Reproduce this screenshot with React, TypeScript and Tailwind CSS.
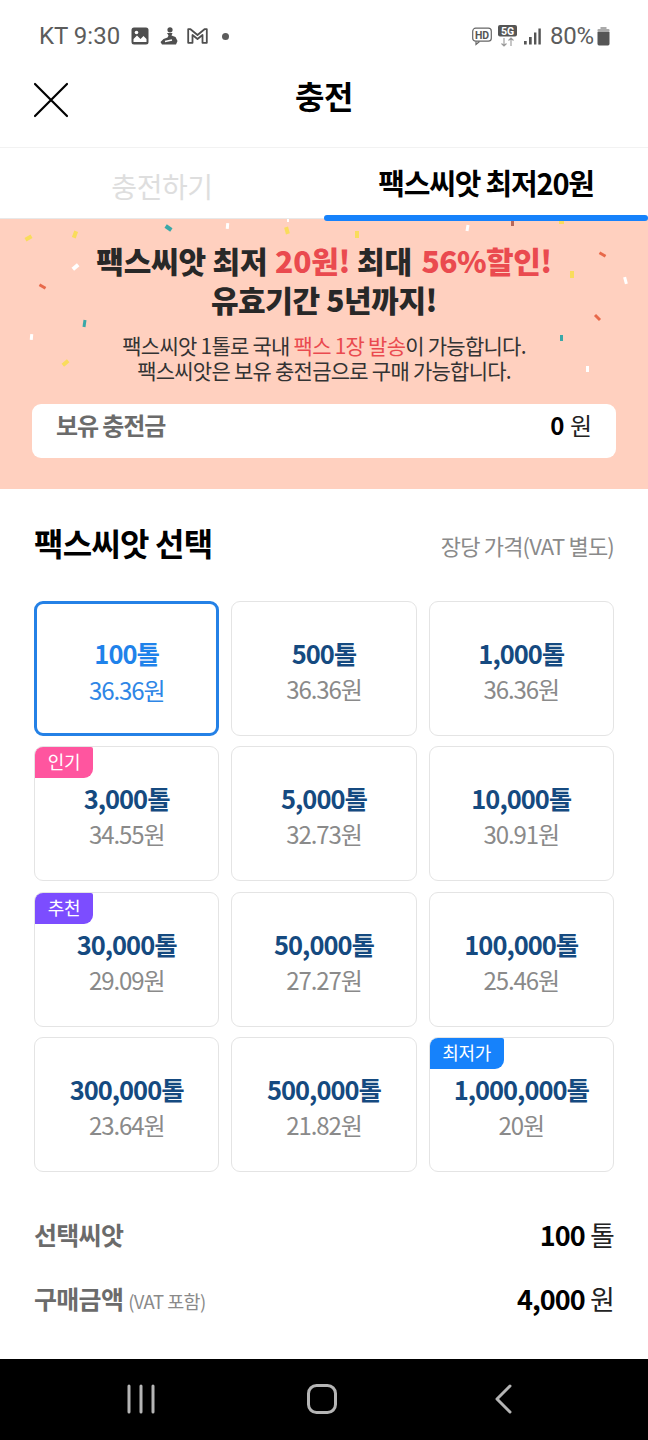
const FONT = { fontFamily: '"Noto Sans CJK KR", "Noto Sans", sans-serif' };

type Seed = { t: string; p: string; badge?: string; badgeClass?: string };

const seeds: Seed[] = [
  { t: "100톨", p: "36.36원" },
  { t: "500톨", p: "36.36원" },
  { t: "1,000톨", p: "36.36원" },
  { t: "3,000톨", p: "34.55원", badge: "인기", badgeClass: "bg-[#ff559f] w-[58px]" },
  { t: "5,000톨", p: "32.73원" },
  { t: "10,000톨", p: "30.91원" },
  { t: "30,000톨", p: "29.09원", badge: "추천", badgeClass: "bg-[#7c4dff] w-[58px]" },
  { t: "50,000톨", p: "27.27원" },
  { t: "100,000톨", p: "25.46원" },
  { t: "300,000톨", p: "23.64원" },
  { t: "500,000톨", p: "21.82원" },
  { t: "1,000,000톨", p: "20원", badge: "최저가", badgeClass: "bg-[#1682fb] w-[74px]" },
];

// centre x, centre y, width, height, rotation, colour
const confetti: [number, number, number, number, number, string][] = [
  [28, 238, 7, 4, -30, "#f9dc5c"],
  [75, 234, 4, 7, 20, "#f9dc5c"],
  [168, 228, 7, 4, 35, "#3aa8a8"],
  [227, 226, 3, 6, 5, "#ffffff"],
  [287, 230, 4, 7, -15, "#f9dc5c"],
  [288, 220, 2, 3, 0, "#ffffff"],
  [75, 267, 7, 4, -40, "#ffffff"],
  [42, 286, 7, 3, 30, "#e8694a"],
  [84, 323, 3, 7, 8, "#3aa8a8"],
  [31, 337, 3, 6, 5, "#ffffff"],
  [65, 363, 7, 4, -40, "#f9dc5c"],
  [357, 234, 4, 7, 0, "#f9dc5c"],
  [467, 228, 3, 6, 10, "#ffffff"],
  [512, 223, 3, 5, 0, "#b8675a"],
  [561, 222, 5, 3, 0, "#f9dc5c"],
  [602, 254, 7, 3, 30, "#e8694a"],
  [572, 274, 4, 7, 0, "#f9dc5c"],
  [625, 280, 3, 7, -15, "#ffffff"],
  [597, 317, 7, 3, 45, "#e8694a"],
  [561, 338, 3, 6, 0, "#3aa8a8"],
  [587, 369, 3, 6, 0, "#ffffff"],
];

function StatusBar() {
  return (
    <div className="h-[72px] flex items-start justify-between pl-[39px] pr-[38px] pt-[20px] text-[#5c5c5c]">
      <div className="flex items-center h-[32px]">
        <span className="text-[24px] leading-[32px]" style={{ fontFamily: "Roboto, sans-serif" }}>KT 9:30</span>
        <svg className="ml-[11px]" width="18" height="18" viewBox="0 0 18 18">
          <rect x="0.5" y="0.5" width="17" height="17" rx="2.5" fill="#4f4f4f" />
          <path d="M2.5 15 L2.5 12 L6 8.5 L9.5 12 L12.5 9 L15.5 12 L15.5 15 Z" fill="#fff" />
          <circle cx="5.5" cy="5.5" r="1.8" fill="#fff" />
        </svg>
        <svg className="ml-[11px]" width="18" height="18" viewBox="0 0 18 18">
          <circle cx="10" cy="2.8" r="2.6" fill="#4f4f4f" />
          <path d="M7 6 L12.5 6 L11.5 8.5 L15.5 10 L17.5 14 L16 17.5 L2 17.5 L0.5 15 L3.5 12 L7.5 10.5 L8.5 8.5 Z" fill="#4f4f4f" />
          <path d="M5 14.5 L12 13" stroke="#fff" strokeWidth="1.4" />
        </svg>
        <svg className="ml-[9px]" width="21" height="16" viewBox="0 0 21 16" fill="none">
          <path d="M1.2 14.8 V1.2 H3.5 L10.5 7 L17.5 1.2 H19.8 V14.8 H15.5 V7 L10.5 11 L5.5 7 V14.8 Z" stroke="#4f4f4f" strokeWidth="1.8" strokeLinejoin="round" />
        </svg>
        <span className="ml-[14px] w-[7px] h-[7px] rounded-full bg-[#5c5c5c]" />
      </div>
      <div className="flex items-center h-[32px]">
        <svg width="20" height="20" viewBox="0 0 20 20" fill="none">
          <rect x="0.7" y="2.2" width="18.6" height="13" rx="3" stroke="#666" strokeWidth="1.2" />
          <path d="M4 15.5 L4 18.5 L7.5 15.5" stroke="#666" strokeWidth="1.2" />
          <text x="10" y="12.8" textAnchor="middle" fontSize="10.5" fontWeight="700" fill="#555" fontFamily="Roboto, sans-serif">HD</text>
        </svg>
        <svg className="ml-[6px]" width="19" height="22" viewBox="0 0 19 22">
          <rect x="0" y="0" width="19" height="11.5" rx="2" fill="#555" />
          <text x="9.5" y="9.7" textAnchor="middle" fontSize="10.5" fontWeight="700" fill="#fff" fontFamily="Roboto, sans-serif">5G</text>
          <path d="M6 13 V21 M3.5 18.5 L6 21 L8.5 18.5 M13 21 V13 M10.5 15.5 L13 13 L15.5 15.5" stroke="#999" strokeWidth="1.1" fill="none" />
        </svg>
        <svg className="ml-[7px]" width="17" height="17" viewBox="0 0 17 17">
          <rect x="0" y="13" width="2.7" height="3.5" fill="#555" />
          <rect x="5" y="9" width="2.7" height="7.5" fill="#555" />
          <rect x="10" y="4.5" width="2.4" height="12" fill="#555" />
          <rect x="14.4" y="0.5" width="2.4" height="16" fill="#555" />
        </svg>
        <span className="ml-[9px] text-[24px] leading-[32px] tracking-[-0.2px]" style={{ fontFamily: "Roboto, sans-serif" }}>80%</span>
        <svg className="ml-[3px]" width="13" height="19" viewBox="0 0 13 19">
          <rect x="3.5" y="0" width="6" height="2.4" fill="#aaa" />
          <rect x="0.5" y="2" width="12" height="3" rx="1" fill="#aaa" />
          <path d="M0.5 5 H12.5 V17 A1.6 1.6 0 0 1 11 18.5 H2 A1.6 1.6 0 0 1 0.5 17 Z" fill="#555" />
        </svg>
      </div>
    </div>
  );
}

function Header() {
  return (
    <div className="relative h-[76px] flex items-start justify-center border-b border-[#f2f2f2]">
      <svg className="absolute left-[32px] top-[10px]" width="37" height="36" viewBox="0 0 37 36" fill="none">
        <path d="M3 2 L35 34 M35 2 L3 34" stroke="#000" strokeWidth="2.2" strokeLinecap="round" />
      </svg>
      <span className="text-[32px] leading-[46px] font-bold text-black tracking-[-0.5px]">충전</span>
    </div>
  );
}

function Tabs() {
  return (
    <div className="relative h-[71px] flex border-b border-[#e8e8e8]">
      <div className="flex-1 flex items-start justify-center pt-[17px]">
        <span className="text-[28px] leading-[42px] text-[#dedede] tracking-[-0.4px]">충전하기</span>
      </div>
      <div className="relative flex-1 flex items-start justify-center pt-[12px]">
        <span className="text-[29px] leading-[44px] font-bold text-black tracking-[-1.2px]">팩스씨앗 최저20원</span>
        <span className="absolute left-0 right-0 -bottom-[3px] h-[6px] rounded-full bg-[#1682fb] z-10" />
      </div>
    </div>
  );
}

function Banner() {
  return (
    <div className="h-[270px] bg-[#ffd0bf] flex flex-col items-center px-[32px] pt-[22px]">
      <div className="text-[30px] leading-[39px] font-black text-[#282828] text-center tracking-[-0.2px] whitespace-nowrap">
        <div>팩스씨앗 최저 <span className="text-[#ea4a4f] ml-[1px]">20원!</span> 최대 <span className="text-[#ea4a4f] ml-[3px] tracking-[-0.5px]">56%할인!</span></div>
        <div className="tracking-[-0.4px]">유효기간 5년까지!</div>
      </div>
      <div className="mt-[14px] text-[21px] leading-[25px] text-[#333] text-center tracking-[-0.75px] whitespace-nowrap">
        <div>팩스씨앗 1톨로 국내 <span className="text-[#ea4a4f]">팩스 1장 발송</span>이 가능합니다.</div>
        <div>팩스씨앗은 보유 충전금으로 구매 가능합니다.</div>
      </div>
      <div className="mt-[21px] w-full h-[54px] bg-white rounded-[9px] flex items-start justify-between pl-[24px] pr-[24px]">
        <span className="text-[24px] leading-[42px] font-bold text-[#6b6b6b] tracking-[-1.1px]">보유 충전금</span>
        <span className="text-[24px] leading-[42px] text-[#222]"><b className="font-bold text-black">0</b> 원</span>
      </div>
    </div>
  );
}

function Card({ s, active }: { s: Seed; active: boolean }) {
  return (
    <div className={`relative h-[135px] rounded-[9px] flex flex-col items-center bg-white ${active ? "pt-[31px] border-[3px] border-[#2481e6]" : "pt-[33px] border border-[#e4e4e4]"}`}>
      {s.badge && (
        <span className={`absolute left-0 top-0 h-[31px] rounded-tl-[8px] rounded-br-[9px] rounded-tr-[2px] text-white text-[18px] leading-[29px] text-center tracking-[-0.3px] ${s.badgeClass}`}>
          {s.badge}
        </span>
      )}
      <span className={`text-[25.5px] leading-[36px] font-bold tracking-[-1px] whitespace-nowrap ${active ? "text-[#1f82ea]" : "text-[#154a80]"}`}>{s.t}</span>
      <span className={`text-[24px] leading-[36px] tracking-[-1.1px] whitespace-nowrap ${active ? "text-[#2e86e6] mt-[1px]" : "text-[#8a8a8a]"}`}>{s.p}</span>
    </div>
  );
}

export default function App() {
  return (
    <div className="relative w-[648px] h-[1440px] bg-white overflow-hidden flex flex-col" style={FONT}>
      <StatusBar />
      <Header />
      <Tabs />
      <Banner />
      {confetti.map(([x, y, w, h, r, c], i) => (
        <span key={i} className="absolute z-0" style={{ left: x - w / 2, top: y - h / 2, width: w, height: h, background: c, transform: `rotate(${r}deg)` }} />
      ))}
      <div className="flex-1 px-[34px] flex flex-col">
        <div className="flex items-center justify-between mt-[33px] h-[46px]">
          <span className="text-[32px] leading-[46px] font-bold text-black tracking-[-0.8px] mb-[6px]">팩스씨앗 선택</span>
          <span className="text-[22px] leading-[32px] text-[#8a8a8a] tracking-[-0.8px]">장당 가격(VAT 별도)</span>
        </div>
        <div className="mt-[33px] grid grid-cols-3 gap-x-[12px] gap-y-[10.3px]">
          {seeds.map((s, i) => <Card key={s.t} s={s} active={i === 0} />)}
        </div>
        <div className="mt-[43px] flex items-center justify-between h-[40px]">
          <span className="text-[25px] font-bold text-[#6b6b6b] tracking-[-0.7px]">선택씨앗</span>
          <span className="text-[27px] text-[#222] tracking-[-0.9px]"><b className="font-bold text-black">100</b> 톨</span>
        </div>
        <div className="mt-[24px] flex items-center justify-between h-[40px]">
          <span className="text-[25px] font-bold text-[#6b6b6b] tracking-[-0.7px]">구매금액 <span className="text-[18.5px] font-normal text-[#8a8a8a] tracking-[-0.6px]">(VAT 포함)</span></span>
          <span className="text-[27px] text-[#222] tracking-[-0.9px]"><b className="font-bold text-black">4,000</b> 원</span>
        </div>
      </div>
      <div className="h-[81px] bg-black flex items-start justify-center shrink-0 pr-[4px]">
        <div className="grid grid-cols-3 w-[544px] pt-[25px]">
          <div className="flex justify-center">
            <svg width="28" height="30" viewBox="0 0 28 30"><path d="M2 2 V28 M14 2 V28 M26 2 V28" stroke="#b5b5b5" strokeWidth="3" strokeLinecap="round" /></svg>
          </div>
          <div className="flex justify-center">
            <svg width="30" height="32" viewBox="0 0 30 32" fill="none"><rect x="1.5" y="1.5" width="27" height="27" rx="8" stroke="#b5b5b5" strokeWidth="3" /></svg>
          </div>
          <div className="flex justify-center">
            <svg width="18" height="30" viewBox="0 0 18 30" fill="none"><path d="M16 2 L3 15 L16 28" stroke="#b5b5b5" strokeWidth="3" strokeLinecap="round" strokeLinejoin="round" /></svg>
          </div>
        </div>
      </div>
    </div>
  );
}
